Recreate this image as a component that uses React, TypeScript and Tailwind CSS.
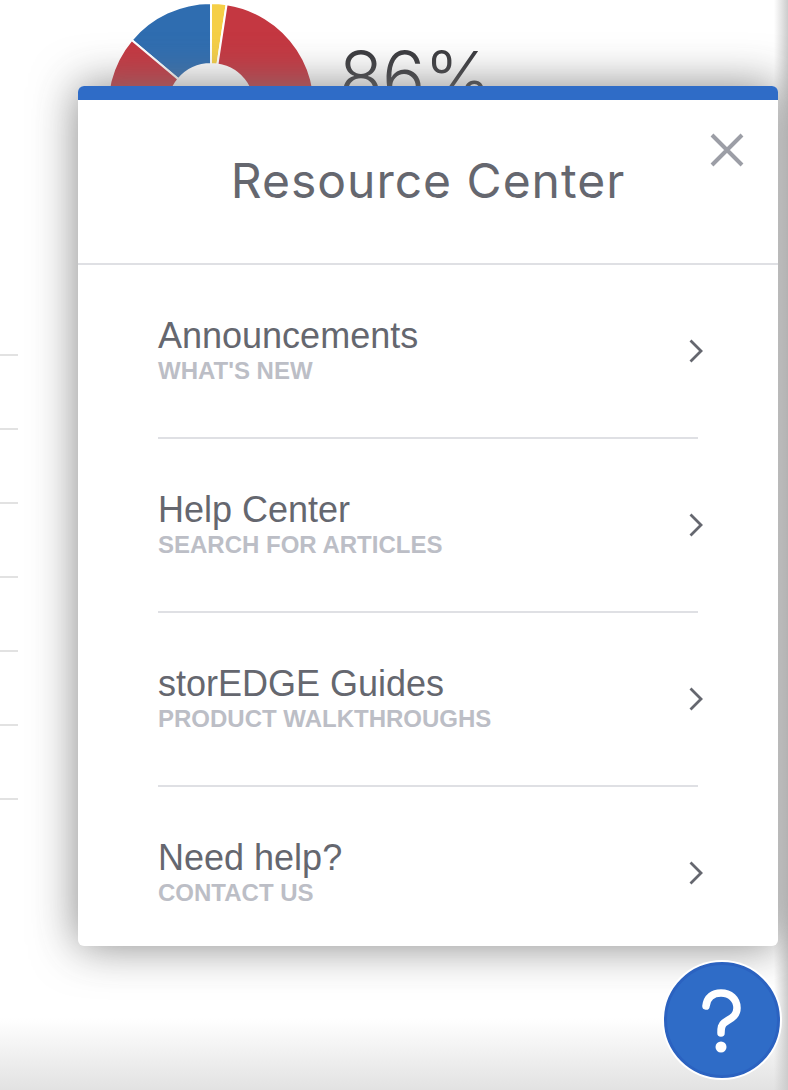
import React from "react";

const ITEMS = [
  { title: "Announcements", sub: "WHAT'S NEW" },
  { title: "Help Center", sub: "SEARCH FOR ARTICLES" },
  { title: "storEDGE Guides", sub: "PRODUCT WALKTHROUGHS" },
  { title: "Need help?", sub: "CONTACT US" },
];

const CX = 211;
const CY = 106.6;
const R = 103.6;
const RI = 42.6;

function slice(a0: number, a1: number) {
  const pt = (r: number, a: number) => {
    const t = (a * Math.PI) / 180;
    return `${(CX + r * Math.sin(t)).toFixed(2)} ${(CY - r * Math.cos(t)).toFixed(2)}`;
  };
  const large = a1 - a0 > 180 ? 1 : 0;
  return `M${pt(RI, a0)} L${pt(R, a0)} A${R} ${R} 0 ${large} 1 ${pt(R, a1)} L${pt(RI, a1)} A${RI} ${RI} 0 ${large} 0 ${pt(RI, a0)} Z`;
}

const Donut = () => (
  <svg width="320" height="215" viewBox="0 0 320 215" className="shrink-0">
    <g stroke="#ffffff" strokeWidth="2">
      <path d={slice(-50, 0)} fill="#2f6db0" />
      <path d={slice(0, 8.7)} fill="#f5cf47" />
      <path d={slice(8.7, 200)} fill="#c43741" />
      <path d={slice(200, 310)} fill="#c43741" />
    </g>
  </svg>
);

const Row = ({ title, sub, last }: { title: string; sub: string; last: boolean }) => (
  <div className={`h-[174px] flex items-center justify-between border-b-2 ${last ? "border-transparent" : "border-[#dfe0e4]"}`}>
    <div className="font-['Liberation_Sans',sans-serif]">
      <div className="text-[36px] leading-[40px] text-[#65676f]">{title}</div>
      <div className="text-[24px] leading-[30px] font-bold text-[#bcbec6]">{sub}</div>
    </div>
    <svg width="16" height="26" viewBox="0 0 16 26" fill="none" stroke="#65676f" strokeWidth="2.8" className="-mr-[6px]">
      <path d="M2.5 2.5 L13 13 L2.5 23.5" />
    </svg>
  </div>
);

export default function App() {
  return (
    <div className="relative w-[788px] h-[1090px] overflow-hidden bg-white">
      {/* dashboard behind the popup */}
      <div className="flex items-start">
        <Donut />
        <div className="mt-[32px] ml-[19px] text-[72px] leading-[90px] font-light text-[#3a3a3e] font-['Inter',sans-serif] tracking-[-1px]">
          86%
        </div>
      </div>
      <div className="absolute left-0 top-[354px] w-[18px] flex flex-col gap-[72px]">
        {[0, 1, 2, 3, 4, 5, 6].map((n) => (
          <div key={n} className="h-[2px] bg-[#e2e2e2]"></div>
        ))}
      </div>

      {/* edge fades */}
      <div className="absolute inset-x-0 bottom-0 h-[72px] bg-gradient-to-b from-transparent to-[#e2e2e2]"></div>
      <div className="absolute inset-y-0 right-0 w-[14px] bg-gradient-to-r from-transparent to-[#cccccc]"></div>

      {/* popup */}
      <div className="absolute left-[78px] top-[86px] w-[700px] h-[860px] bg-white rounded-[6px] overflow-hidden shadow-[0_0_45px_rgba(120,120,120,0.9)]">
        <div className="h-[14px] bg-[#2f6cc7]"></div>
        <div className="relative h-[165px] border-b-2 border-[#dfe0e4] flex items-center justify-center">
          <div className="text-[48px] font-['Inter',sans-serif] font-normal text-[#65676f] tracking-[1px] -mt-[2px]">Resource Center</div>
          <svg width="34" height="34" viewBox="0 0 34 34" fill="none" stroke="#9c9ea6" strokeWidth="4" className="absolute right-[34px] top-[33px]">
            <path d="M2 2 L32 32 M32 2 L2 32" />
          </svg>
        </div>
        <div className="px-[80px]">
          {ITEMS.map((it, i) => (
            <Row key={it.title} title={it.title} sub={it.sub} last={i === ITEMS.length - 1} />
          ))}
        </div>
      </div>

      {/* help button */}
      <div className="absolute left-[664px] top-[962px] w-[116px] h-[116px] rounded-full bg-[#2f6cc7] border-[3px] border-[#2b62c0] shadow-[0_0_0_2px_#ffffff] flex items-center justify-center">
        <svg width="42" height="64" viewBox="0 0 42 64" fill="none" className="mt-[2px]">
          <path d="M5 17 C6 8 12 4 20 4 C29 4 36 10 36 19 C36 28 28 30 23 34 C20.5 36 20 38 20 44" stroke="#ffffff" strokeWidth="7.5" strokeLinecap="round" />
          <circle cx="20" cy="58" r="5.5" fill="#ffffff" />
        </svg>
      </div>
    </div>
  );
}
